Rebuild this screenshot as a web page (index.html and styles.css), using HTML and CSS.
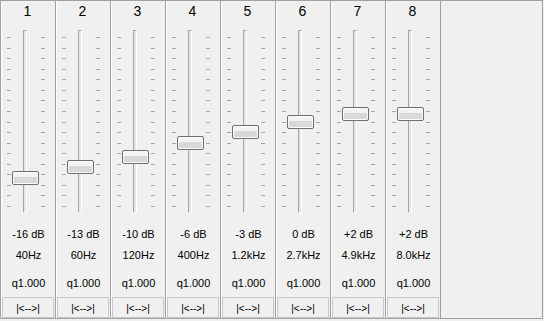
FILE: index.html
```html
<!DOCTYPE html>
<html>
<head>
<meta charset="utf-8">
<link rel="stylesheet" href="styles.css">
</head>
<body>
<div class="panel">
  <div class="band">
    <div class="num">1</div>
    <div class="bar">
      <div class="ticks"><i></i><i></i><i></i><i></i><i></i><i></i><i></i><i></i><i></i><i></i><i></i><i></i><i></i><i></i><i></i><i></i><i></i></div>
      <div class="track"></div>
      <div class="ticks right"><i></i><i></i><i></i><i></i><i></i><i></i><i></i><i></i><i></i><i></i><i></i><i></i><i></i><i></i><i></i><i></i><i></i></div>
      <div class="thumb" style="top:150px"></div>
    </div>
    <div class="db">-16 dB</div>
    <div class="hz">40Hz</div>
    <div class="q">q1.000</div>
    <div class="btn">|&lt;--&gt;|</div>
  </div>
  <div class="band">
    <div class="num">2</div>
    <div class="bar">
      <div class="ticks"><i></i><i></i><i></i><i></i><i></i><i></i><i></i><i></i><i></i><i></i><i></i><i></i><i></i><i></i><i></i><i></i><i></i></div>
      <div class="track"></div>
      <div class="ticks right"><i></i><i></i><i></i><i></i><i></i><i></i><i></i><i></i><i></i><i></i><i></i><i></i><i></i><i></i><i></i><i></i><i></i></div>
      <div class="thumb" style="top:139px"></div>
    </div>
    <div class="db">-13 dB</div>
    <div class="hz">60Hz</div>
    <div class="q">q1.000</div>
    <div class="btn">|&lt;--&gt;|</div>
  </div>
  <div class="band">
    <div class="num">3</div>
    <div class="bar">
      <div class="ticks"><i></i><i></i><i></i><i></i><i></i><i></i><i></i><i></i><i></i><i></i><i></i><i></i><i></i><i></i><i></i><i></i><i></i></div>
      <div class="track"></div>
      <div class="ticks right"><i></i><i></i><i></i><i></i><i></i><i></i><i></i><i></i><i></i><i></i><i></i><i></i><i></i><i></i><i></i><i></i><i></i></div>
      <div class="thumb" style="top:129px"></div>
    </div>
    <div class="db">-10 dB</div>
    <div class="hz">120Hz</div>
    <div class="q">q1.000</div>
    <div class="btn">|&lt;--&gt;|</div>
  </div>
  <div class="band">
    <div class="num">4</div>
    <div class="bar">
      <div class="ticks"><i></i><i></i><i></i><i></i><i></i><i></i><i></i><i></i><i></i><i></i><i></i><i></i><i></i><i></i><i></i><i></i><i></i></div>
      <div class="track"></div>
      <div class="ticks right"><i></i><i></i><i></i><i></i><i></i><i></i><i></i><i></i><i></i><i></i><i></i><i></i><i></i><i></i><i></i><i></i><i></i></div>
      <div class="thumb" style="top:115px"></div>
    </div>
    <div class="db">-6 dB</div>
    <div class="hz">400Hz</div>
    <div class="q">q1.000</div>
    <div class="btn">|&lt;--&gt;|</div>
  </div>
  <div class="band">
    <div class="num">5</div>
    <div class="bar">
      <div class="ticks"><i></i><i></i><i></i><i></i><i></i><i></i><i></i><i></i><i></i><i></i><i></i><i></i><i></i><i></i><i></i><i></i><i></i></div>
      <div class="track"></div>
      <div class="ticks right"><i></i><i></i><i></i><i></i><i></i><i></i><i></i><i></i><i></i><i></i><i></i><i></i><i></i><i></i><i></i><i></i><i></i></div>
      <div class="thumb" style="top:104px"></div>
    </div>
    <div class="db">-3 dB</div>
    <div class="hz">1.2kHz</div>
    <div class="q">q1.000</div>
    <div class="btn">|&lt;--&gt;|</div>
  </div>
  <div class="band">
    <div class="num">6</div>
    <div class="bar">
      <div class="ticks"><i></i><i></i><i></i><i></i><i></i><i></i><i></i><i></i><i></i><i></i><i></i><i></i><i></i><i></i><i></i><i></i><i></i></div>
      <div class="track"></div>
      <div class="ticks right"><i></i><i></i><i></i><i></i><i></i><i></i><i></i><i></i><i></i><i></i><i></i><i></i><i></i><i></i><i></i><i></i><i></i></div>
      <div class="thumb" style="top:94px"></div>
    </div>
    <div class="db">0 dB</div>
    <div class="hz">2.7kHz</div>
    <div class="q">q1.000</div>
    <div class="btn">|&lt;--&gt;|</div>
  </div>
  <div class="band">
    <div class="num">7</div>
    <div class="bar">
      <div class="ticks"><i></i><i></i><i></i><i></i><i></i><i></i><i></i><i></i><i></i><i></i><i></i><i></i><i></i><i></i><i></i><i></i><i></i></div>
      <div class="track"></div>
      <div class="ticks right"><i></i><i></i><i></i><i></i><i></i><i></i><i></i><i></i><i></i><i></i><i></i><i></i><i></i><i></i><i></i><i></i><i></i></div>
      <div class="thumb" style="top:86px"></div>
    </div>
    <div class="db">+2 dB</div>
    <div class="hz">4.9kHz</div>
    <div class="q">q1.000</div>
    <div class="btn">|&lt;--&gt;|</div>
  </div>
  <div class="band">
    <div class="num">8</div>
    <div class="bar">
      <div class="ticks"><i></i><i></i><i></i><i></i><i></i><i></i><i></i><i></i><i></i><i></i><i></i><i></i><i></i><i></i><i></i><i></i><i></i></div>
      <div class="track"></div>
      <div class="ticks right"><i></i><i></i><i></i><i></i><i></i><i></i><i></i><i></i><i></i><i></i><i></i><i></i><i></i><i></i><i></i><i></i><i></i></div>
      <div class="thumb" style="top:86px"></div>
    </div>
    <div class="db">+2 dB</div>
    <div class="hz">8.0kHz</div>
    <div class="q">q1.000</div>
    <div class="btn">|&lt;--&gt;|</div>
  </div>
</div>
</body>
</html>
```
FILE: styles.css
```css
html, body {
  margin: 0;
  padding: 0;
  background: #f0f0f0;
}

body {
  font-family: "Liberation Sans", Arial, sans-serif;
  color: #000;
}

.panel {
  box-sizing: border-box;
  width: 543px;
  height: 319px;
  border: 1px solid #a0a0a0;
  display: flex;
  background: #f0f0f0;
}

.band {
  box-sizing: border-box;
  width: 55px;
  height: 317px;
  border-left: 1px solid #ffffff;
  border-right: 1px solid #a0a0a0;
  display: flex;
  flex-direction: column;
}

.num {
  height: 20px;
  line-height: 20px;
  font-size: 14px;
  text-align: center;
  padding-right: 2px;
}

.bar {
  position: relative;
  height: 203px;
  display: flex;
  align-items: flex-start;
  padding-left: 5px;
}

.ticks {
  width: 4px;
  height: 170px;
  margin-top: 16px;
  display: flex;
  flex-direction: column;
  justify-content: space-between;
}

.ticks i {
  display: block;
  height: 1px;
  background: #a8a8a8;
}

.ticks.right {
  margin-left: 14px;
}

.track {
  box-sizing: border-box;
  width: 4px;
  height: 183px;
  margin-top: 9px;
  margin-left: 12px;
  border-left: 1px solid #a6a6a6;
  border-top: 1px solid #a6a6a6;
  border-right: 1px solid #ffffff;
  border-bottom: 1px solid #ffffff;
  background: #e3e7e7;
}

.thumb {
  position: absolute;
  left: 10px;
  box-sizing: border-box;
  width: 27px;
  height: 14px;
  border: 1px solid #6e6e6e;
  border-radius: 2px;
  background: linear-gradient(#f6f6f6 0, #f1f1f1 45%, #dadada 45%, #d6d6d6 100%);
  box-shadow: inset 0 0 0 1px #fafafa;
}

.db {
  height: 20px;
  line-height: 20px;
  font-size: 11px;
  text-align: center;
}

.hz {
  height: 22px;
  line-height: 22px;
  font-size: 11px;
  text-align: center;
}

.q {
  box-sizing: border-box;
  height: 31px;
  padding-top: 7px;
  line-height: 20px;
  font-size: 11px;
  text-align: center;
}

.btn {
  box-sizing: border-box;
  height: 21px;
  margin-right: 1px;
  border: 1px solid #c8c8c8;
  padding-top: 3px;
  line-height: 16px;
  font-size: 10px;
  text-align: center;
}
```
